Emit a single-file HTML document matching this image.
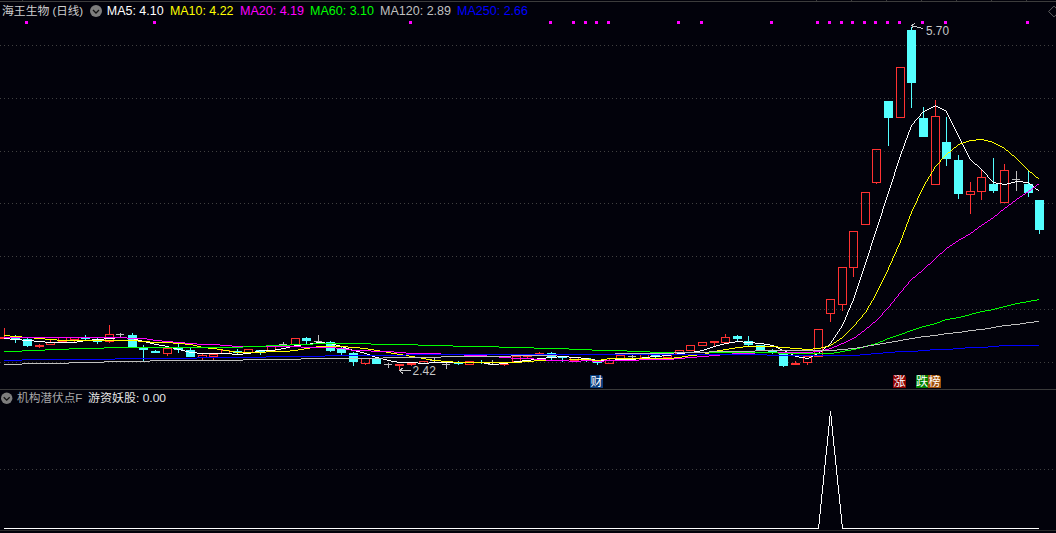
<!DOCTYPE html>
<html lang="zh-CN"><head><meta charset="utf-8"><title>海王生物(日线)</title>
<style>html,body{margin:0;padding:0;background:#02020b;overflow:hidden}svg{display:block}text{font-family:"Liberation Sans","Noto Sans CJK SC",sans-serif;font-size:12px}.cj{font-family:"Liberation Sans","Noto Sans CJK SC",sans-serif}.ic{font-family:"Noto Sans CJK SC",sans-serif;font-size:12px;fill:#fff}.ma{fill:none;stroke-width:1;shape-rendering:crispEdges}</style></head><body>
<svg width="1056" height="533" viewBox="0 0 1056 533">
<defs><pattern id="dot" x="0" y="0" width="4" height="1" patternUnits="userSpaceOnUse"><rect x="0" y="0" width="1" height="1" fill="#404040"/></pattern></defs>
<rect width="1056" height="533" fill="#02020b"/>
<g shape-rendering="crispEdges">
<rect x="0" y="1" width="1056" height="1" fill="#3c3c3c"/>
<rect x="22" y="0" width="1" height="1" fill="#3c3c3c"/>
<rect x="816" y="0" width="1" height="1" fill="#3c3c3c"/>
<rect x="851" y="0" width="1" height="1" fill="#3c3c3c"/>
<rect x="886" y="0" width="1" height="1" fill="#3c3c3c"/>
<rect x="921" y="0" width="1" height="1" fill="#3c3c3c"/>
<rect x="956" y="0" width="1" height="1" fill="#3c3c3c"/>
<rect x="991" y="0" width="1" height="1" fill="#3c3c3c"/>
<rect x="1026" y="0" width="1" height="1" fill="#3c3c3c"/>
<rect x="0" y="389" width="1056" height="1" fill="#3a3a3a"/>
<rect x="0" y="530" width="1056" height="1" fill="#2c2c2c"/>
<rect x="0" y="45" width="1056" height="1" fill="url(#dot)"/>
<rect x="0" y="98" width="1056" height="1" fill="url(#dot)"/>
<rect x="0" y="151" width="1056" height="1" fill="url(#dot)"/>
<rect x="0" y="203" width="1056" height="1" fill="url(#dot)"/>
<rect x="0" y="256" width="1056" height="1" fill="url(#dot)"/>
<rect x="0" y="309" width="1056" height="1" fill="url(#dot)"/>
<rect x="0" y="362" width="1056" height="1" fill="url(#dot)"/>
<rect x="0" y="469" width="1056" height="1" fill="url(#dot)"/>
<rect x="25" y="21" width="3" height="3" fill="#ff00ff"/>
<rect x="153" y="21" width="3" height="3" fill="#ff00ff"/>
<rect x="409" y="21" width="3" height="3" fill="#ff00ff"/>
<rect x="549" y="21" width="3" height="3" fill="#ff00ff"/>
<rect x="572" y="21" width="3" height="3" fill="#ff00ff"/>
<rect x="584" y="21" width="3" height="3" fill="#ff00ff"/>
<rect x="595" y="21" width="3" height="3" fill="#ff00ff"/>
<rect x="607" y="21" width="3" height="3" fill="#ff00ff"/>
<rect x="677" y="21" width="3" height="3" fill="#ff00ff"/>
<rect x="700" y="21" width="3" height="3" fill="#ff00ff"/>
<rect x="770" y="21" width="3" height="3" fill="#ff00ff"/>
<rect x="816" y="21" width="3" height="3" fill="#ff00ff"/>
<rect x="828" y="21" width="3" height="3" fill="#ff00ff"/>
<rect x="840" y="21" width="3" height="3" fill="#ff00ff"/>
<rect x="851" y="21" width="3" height="3" fill="#ff00ff"/>
<rect x="863" y="21" width="3" height="3" fill="#ff00ff"/>
<rect x="874" y="21" width="3" height="3" fill="#ff00ff"/>
<rect x="886" y="21" width="3" height="3" fill="#ff00ff"/>
<rect x="898" y="21" width="3" height="3" fill="#ff00ff"/>
<rect x="921" y="21" width="3" height="3" fill="#ff00ff"/>
<rect x="944" y="21" width="3" height="3" fill="#ff00ff"/>
<rect x="1026" y="21" width="3" height="3" fill="#ff00ff"/>
<rect x="4" y="328" width="1" height="11" fill="#ff3232"/>
<rect x="0" y="337" width="9" height="2" fill="#ff3232"/>
<rect x="15" y="335" width="1" height="8" fill="#54ffff"/>
<rect x="11" y="338" width="9" height="2" fill="#54ffff"/>
<rect x="27" y="338" width="1" height="9" fill="#54ffff"/>
<rect x="23" y="339" width="9" height="7" fill="#54ffff"/>
<rect x="39" y="344" width="1" height="4" fill="#ff3232"/>
<rect x="35" y="345" width="9" height="2" fill="#ff3232"/>
<rect x="50" y="340" width="1" height="2" fill="#ff3232"/>
<rect x="46" y="342" width="9" height="1" fill="#ff3232"/>
<rect x="46" y="344" width="9" height="1" fill="#ff3232"/>
<rect x="46" y="342" width="1" height="3" fill="#ff3232"/>
<rect x="54" y="342" width="1" height="3" fill="#ff3232"/>
<rect x="58" y="337" width="9" height="1" fill="#ff3232"/>
<rect x="58" y="341" width="9" height="1" fill="#ff3232"/>
<rect x="58" y="337" width="1" height="5" fill="#ff3232"/>
<rect x="66" y="337" width="1" height="5" fill="#ff3232"/>
<rect x="74" y="340" width="1" height="2" fill="#ff3232"/>
<rect x="70" y="337" width="9" height="1" fill="#ff3232"/>
<rect x="70" y="339" width="9" height="1" fill="#ff3232"/>
<rect x="70" y="337" width="1" height="3" fill="#ff3232"/>
<rect x="78" y="337" width="1" height="3" fill="#ff3232"/>
<rect x="85" y="335" width="1" height="5" fill="#54ffff"/>
<rect x="81" y="337" width="9" height="2" fill="#54ffff"/>
<rect x="97" y="338" width="1" height="6" fill="#54ffff"/>
<rect x="93" y="339" width="9" height="3" fill="#54ffff"/>
<rect x="109" y="325" width="1" height="9" fill="#ff3232"/>
<rect x="109" y="342" width="1" height="1" fill="#ff3232"/>
<rect x="105" y="334" width="9" height="1" fill="#ff3232"/>
<rect x="105" y="341" width="9" height="1" fill="#ff3232"/>
<rect x="105" y="334" width="1" height="8" fill="#ff3232"/>
<rect x="113" y="334" width="1" height="8" fill="#ff3232"/>
<rect x="120" y="333" width="1" height="4" fill="#c0c0c0"/>
<rect x="116" y="334" width="8" height="1" fill="#c0c0c0"/>
<rect x="132" y="333" width="1" height="14" fill="#54ffff"/>
<rect x="128" y="335" width="9" height="12" fill="#54ffff"/>
<rect x="143" y="345" width="1" height="16" fill="#54ffff"/>
<rect x="139" y="348" width="9" height="2" fill="#54ffff"/>
<rect x="155" y="350" width="1" height="3" fill="#54ffff"/>
<rect x="151" y="351" width="9" height="2" fill="#54ffff"/>
<rect x="167" y="354" width="1" height="2" fill="#ff3232"/>
<rect x="163" y="348" width="9" height="1" fill="#ff3232"/>
<rect x="163" y="353" width="9" height="1" fill="#ff3232"/>
<rect x="163" y="348" width="1" height="6" fill="#ff3232"/>
<rect x="171" y="348" width="1" height="6" fill="#ff3232"/>
<rect x="178" y="344" width="1" height="9" fill="#54ffff"/>
<rect x="174" y="348" width="9" height="2" fill="#54ffff"/>
<rect x="190" y="348" width="1" height="9" fill="#54ffff"/>
<rect x="186" y="350" width="9" height="7" fill="#54ffff"/>
<rect x="202" y="354" width="1" height="1" fill="#ff3232"/>
<rect x="202" y="358" width="1" height="2" fill="#ff3232"/>
<rect x="198" y="355" width="9" height="1" fill="#ff3232"/>
<rect x="198" y="357" width="9" height="1" fill="#ff3232"/>
<rect x="198" y="355" width="1" height="3" fill="#ff3232"/>
<rect x="206" y="355" width="1" height="3" fill="#ff3232"/>
<rect x="213" y="357" width="1" height="3" fill="#ff3232"/>
<rect x="209" y="354" width="9" height="1" fill="#ff3232"/>
<rect x="209" y="356" width="9" height="1" fill="#ff3232"/>
<rect x="209" y="354" width="1" height="3" fill="#ff3232"/>
<rect x="217" y="354" width="1" height="3" fill="#ff3232"/>
<rect x="221" y="350" width="9" height="1" fill="#ff3232"/>
<rect x="221" y="353" width="9" height="1" fill="#ff3232"/>
<rect x="221" y="350" width="1" height="4" fill="#ff3232"/>
<rect x="229" y="350" width="1" height="4" fill="#ff3232"/>
<rect x="237" y="349" width="1" height="5" fill="#54ffff"/>
<rect x="233" y="351" width="9" height="2" fill="#54ffff"/>
<rect x="248" y="353" width="1" height="1" fill="#ff3232"/>
<rect x="244" y="349" width="9" height="1" fill="#ff3232"/>
<rect x="244" y="352" width="9" height="1" fill="#ff3232"/>
<rect x="244" y="349" width="1" height="4" fill="#ff3232"/>
<rect x="252" y="349" width="1" height="4" fill="#ff3232"/>
<rect x="260" y="350" width="1" height="5" fill="#54ffff"/>
<rect x="256" y="350" width="9" height="2" fill="#54ffff"/>
<rect x="267" y="346" width="9" height="1" fill="#ff3232"/>
<rect x="267" y="350" width="9" height="1" fill="#ff3232"/>
<rect x="267" y="346" width="1" height="5" fill="#ff3232"/>
<rect x="275" y="346" width="1" height="5" fill="#ff3232"/>
<rect x="283" y="342" width="1" height="5" fill="#c0c0c0"/>
<rect x="279" y="344" width="8" height="1" fill="#c0c0c0"/>
<rect x="291" y="338" width="9" height="1" fill="#ff3232"/>
<rect x="291" y="344" width="9" height="1" fill="#ff3232"/>
<rect x="291" y="338" width="1" height="7" fill="#ff3232"/>
<rect x="299" y="338" width="1" height="7" fill="#ff3232"/>
<rect x="306" y="337" width="1" height="7" fill="#54ffff"/>
<rect x="302" y="338" width="9" height="3" fill="#54ffff"/>
<rect x="318" y="335" width="1" height="9" fill="#c0c0c0"/>
<rect x="314" y="341" width="8" height="1" fill="#c0c0c0"/>
<rect x="330" y="341" width="1" height="11" fill="#54ffff"/>
<rect x="326" y="342" width="9" height="9" fill="#54ffff"/>
<rect x="341" y="347" width="1" height="8" fill="#54ffff"/>
<rect x="337" y="348" width="9" height="5" fill="#54ffff"/>
<rect x="353" y="352" width="1" height="14" fill="#54ffff"/>
<rect x="349" y="353" width="9" height="9" fill="#54ffff"/>
<rect x="365" y="364" width="1" height="1" fill="#ff3232"/>
<rect x="361" y="358" width="9" height="1" fill="#ff3232"/>
<rect x="361" y="363" width="9" height="1" fill="#ff3232"/>
<rect x="361" y="358" width="1" height="6" fill="#ff3232"/>
<rect x="369" y="358" width="1" height="6" fill="#ff3232"/>
<rect x="372" y="359" width="9" height="5" fill="#54ffff"/>
<rect x="388" y="363" width="1" height="5" fill="#c0c0c0"/>
<rect x="384" y="364" width="8" height="1" fill="#c0c0c0"/>
<rect x="399" y="364" width="1" height="7" fill="#ff3232"/>
<rect x="395" y="364" width="9" height="2" fill="#ff3232"/>
<rect x="411" y="363" width="1" height="3" fill="#ff3232"/>
<rect x="407" y="363" width="9" height="2" fill="#ff3232"/>
<rect x="419" y="361" width="9" height="1" fill="#ff3232"/>
<rect x="419" y="363" width="9" height="1" fill="#ff3232"/>
<rect x="419" y="361" width="1" height="3" fill="#ff3232"/>
<rect x="427" y="361" width="1" height="3" fill="#ff3232"/>
<rect x="434" y="357" width="1" height="5" fill="#c0c0c0"/>
<rect x="430" y="360" width="8" height="1" fill="#c0c0c0"/>
<rect x="446" y="363" width="1" height="6" fill="#c0c0c0"/>
<rect x="442" y="364" width="8" height="1" fill="#c0c0c0"/>
<rect x="458" y="361" width="1" height="4" fill="#54ffff"/>
<rect x="454" y="363" width="9" height="1" fill="#54ffff"/>
<rect x="465" y="361" width="9" height="1" fill="#ff3232"/>
<rect x="465" y="364" width="9" height="1" fill="#ff3232"/>
<rect x="465" y="361" width="1" height="4" fill="#ff3232"/>
<rect x="473" y="361" width="1" height="4" fill="#ff3232"/>
<rect x="481" y="360" width="1" height="4" fill="#54ffff"/>
<rect x="477" y="362" width="9" height="1" fill="#54ffff"/>
<rect x="492" y="360" width="1" height="5" fill="#c0c0c0"/>
<rect x="488" y="364" width="8" height="1" fill="#c0c0c0"/>
<rect x="504" y="364" width="1" height="2" fill="#ff3232"/>
<rect x="500" y="364" width="9" height="1" fill="#ff3232"/>
<rect x="512" y="356" width="9" height="1" fill="#ff3232"/>
<rect x="512" y="361" width="9" height="1" fill="#ff3232"/>
<rect x="512" y="356" width="1" height="6" fill="#ff3232"/>
<rect x="520" y="356" width="1" height="6" fill="#ff3232"/>
<rect x="527" y="356" width="1" height="2" fill="#ff3232"/>
<rect x="523" y="356" width="9" height="1" fill="#ff3232"/>
<rect x="539" y="352" width="1" height="4" fill="#ff3232"/>
<rect x="535" y="353" width="9" height="1" fill="#ff3232"/>
<rect x="551" y="352" width="1" height="8" fill="#54ffff"/>
<rect x="547" y="353" width="9" height="5" fill="#54ffff"/>
<rect x="562" y="356" width="1" height="6" fill="#54ffff"/>
<rect x="558" y="356" width="9" height="2" fill="#54ffff"/>
<rect x="570" y="357" width="9" height="1" fill="#ff3232"/>
<rect x="570" y="360" width="9" height="1" fill="#ff3232"/>
<rect x="570" y="357" width="1" height="4" fill="#ff3232"/>
<rect x="578" y="357" width="1" height="4" fill="#ff3232"/>
<rect x="586" y="358" width="1" height="4" fill="#54ffff"/>
<rect x="582" y="358" width="9" height="2" fill="#54ffff"/>
<rect x="597" y="360" width="1" height="5" fill="#54ffff"/>
<rect x="593" y="360" width="9" height="3" fill="#54ffff"/>
<rect x="609" y="359" width="1" height="1" fill="#ff3232"/>
<rect x="605" y="360" width="9" height="1" fill="#ff3232"/>
<rect x="605" y="363" width="9" height="1" fill="#ff3232"/>
<rect x="605" y="360" width="1" height="4" fill="#ff3232"/>
<rect x="613" y="360" width="1" height="4" fill="#ff3232"/>
<rect x="616" y="355" width="9" height="1" fill="#ff3232"/>
<rect x="616" y="358" width="9" height="1" fill="#ff3232"/>
<rect x="616" y="355" width="1" height="4" fill="#ff3232"/>
<rect x="624" y="355" width="1" height="4" fill="#ff3232"/>
<rect x="632" y="355" width="1" height="3" fill="#c0c0c0"/>
<rect x="628" y="356" width="8" height="1" fill="#c0c0c0"/>
<rect x="640" y="354" width="9" height="1" fill="#ff3232"/>
<rect x="640" y="357" width="9" height="1" fill="#ff3232"/>
<rect x="640" y="354" width="1" height="4" fill="#ff3232"/>
<rect x="648" y="354" width="1" height="4" fill="#ff3232"/>
<rect x="655" y="355" width="1" height="3" fill="#54ffff"/>
<rect x="651" y="355" width="9" height="2" fill="#54ffff"/>
<rect x="663" y="355" width="9" height="1" fill="#ff3232"/>
<rect x="663" y="357" width="9" height="1" fill="#ff3232"/>
<rect x="663" y="355" width="1" height="3" fill="#ff3232"/>
<rect x="671" y="355" width="1" height="3" fill="#ff3232"/>
<rect x="675" y="350" width="9" height="1" fill="#ff3232"/>
<rect x="675" y="353" width="9" height="1" fill="#ff3232"/>
<rect x="675" y="350" width="1" height="4" fill="#ff3232"/>
<rect x="683" y="350" width="1" height="4" fill="#ff3232"/>
<rect x="686" y="345" width="9" height="1" fill="#ff3232"/>
<rect x="686" y="350" width="9" height="1" fill="#ff3232"/>
<rect x="686" y="345" width="1" height="6" fill="#ff3232"/>
<rect x="694" y="345" width="1" height="6" fill="#ff3232"/>
<rect x="698" y="342" width="9" height="1" fill="#ff3232"/>
<rect x="698" y="345" width="9" height="1" fill="#ff3232"/>
<rect x="698" y="342" width="1" height="4" fill="#ff3232"/>
<rect x="706" y="342" width="1" height="4" fill="#ff3232"/>
<rect x="714" y="341" width="1" height="5" fill="#ff3232"/>
<rect x="710" y="341" width="9" height="2" fill="#ff3232"/>
<rect x="725" y="334" width="1" height="3" fill="#ff3232"/>
<rect x="721" y="337" width="9" height="1" fill="#ff3232"/>
<rect x="721" y="342" width="9" height="1" fill="#ff3232"/>
<rect x="721" y="337" width="1" height="6" fill="#ff3232"/>
<rect x="729" y="337" width="1" height="6" fill="#ff3232"/>
<rect x="737" y="335" width="1" height="6" fill="#54ffff"/>
<rect x="733" y="336" width="9" height="3" fill="#54ffff"/>
<rect x="748" y="336" width="1" height="10" fill="#54ffff"/>
<rect x="744" y="341" width="9" height="4" fill="#54ffff"/>
<rect x="760" y="345" width="1" height="6" fill="#54ffff"/>
<rect x="756" y="345" width="9" height="5" fill="#54ffff"/>
<rect x="772" y="349" width="1" height="5" fill="#54ffff"/>
<rect x="768" y="350" width="9" height="2" fill="#54ffff"/>
<rect x="783" y="353" width="1" height="14" fill="#54ffff"/>
<rect x="779" y="353" width="9" height="13" fill="#54ffff"/>
<rect x="795" y="361" width="1" height="4" fill="#ff3232"/>
<rect x="791" y="363" width="9" height="2" fill="#ff3232"/>
<rect x="807" y="363" width="1" height="2" fill="#ff3232"/>
<rect x="803" y="356" width="9" height="1" fill="#ff3232"/>
<rect x="803" y="362" width="9" height="1" fill="#ff3232"/>
<rect x="803" y="356" width="1" height="7" fill="#ff3232"/>
<rect x="811" y="356" width="1" height="7" fill="#ff3232"/>
<rect x="814" y="329" width="9" height="1" fill="#ff3232"/>
<rect x="814" y="356" width="9" height="1" fill="#ff3232"/>
<rect x="814" y="329" width="1" height="28" fill="#ff3232"/>
<rect x="822" y="329" width="1" height="28" fill="#ff3232"/>
<rect x="830" y="314" width="1" height="8" fill="#ff3232"/>
<rect x="826" y="299" width="9" height="1" fill="#ff3232"/>
<rect x="826" y="313" width="9" height="1" fill="#ff3232"/>
<rect x="826" y="299" width="1" height="15" fill="#ff3232"/>
<rect x="834" y="299" width="1" height="15" fill="#ff3232"/>
<rect x="842" y="305" width="1" height="6" fill="#ff3232"/>
<rect x="838" y="267" width="9" height="1" fill="#ff3232"/>
<rect x="838" y="304" width="9" height="1" fill="#ff3232"/>
<rect x="838" y="267" width="1" height="38" fill="#ff3232"/>
<rect x="846" y="267" width="1" height="38" fill="#ff3232"/>
<rect x="853" y="268" width="1" height="9" fill="#ff3232"/>
<rect x="849" y="231" width="9" height="1" fill="#ff3232"/>
<rect x="849" y="267" width="9" height="1" fill="#ff3232"/>
<rect x="849" y="231" width="1" height="37" fill="#ff3232"/>
<rect x="857" y="231" width="1" height="37" fill="#ff3232"/>
<rect x="861" y="192" width="9" height="1" fill="#ff3232"/>
<rect x="861" y="224" width="9" height="1" fill="#ff3232"/>
<rect x="861" y="192" width="1" height="33" fill="#ff3232"/>
<rect x="869" y="192" width="1" height="33" fill="#ff3232"/>
<rect x="876" y="183" width="1" height="1" fill="#ff3232"/>
<rect x="872" y="149" width="9" height="1" fill="#ff3232"/>
<rect x="872" y="182" width="9" height="1" fill="#ff3232"/>
<rect x="872" y="149" width="1" height="34" fill="#ff3232"/>
<rect x="880" y="149" width="1" height="34" fill="#ff3232"/>
<rect x="888" y="101" width="1" height="45" fill="#54ffff"/>
<rect x="884" y="101" width="9" height="17" fill="#54ffff"/>
<rect x="896" y="67" width="9" height="1" fill="#ff3232"/>
<rect x="896" y="117" width="9" height="1" fill="#ff3232"/>
<rect x="896" y="67" width="1" height="51" fill="#ff3232"/>
<rect x="904" y="67" width="1" height="51" fill="#ff3232"/>
<rect x="911" y="27" width="1" height="81" fill="#54ffff"/>
<rect x="907" y="30" width="9" height="53" fill="#54ffff"/>
<rect x="923" y="107" width="1" height="30" fill="#54ffff"/>
<rect x="919" y="118" width="9" height="19" fill="#54ffff"/>
<rect x="935" y="100" width="1" height="16" fill="#ff3232"/>
<rect x="931" y="116" width="9" height="1" fill="#ff3232"/>
<rect x="931" y="184" width="9" height="1" fill="#ff3232"/>
<rect x="931" y="116" width="1" height="69" fill="#ff3232"/>
<rect x="939" y="116" width="1" height="69" fill="#ff3232"/>
<rect x="946" y="117" width="1" height="49" fill="#54ffff"/>
<rect x="942" y="142" width="9" height="17" fill="#54ffff"/>
<rect x="958" y="155" width="1" height="44" fill="#54ffff"/>
<rect x="954" y="160" width="9" height="34" fill="#54ffff"/>
<rect x="970" y="182" width="1" height="9" fill="#ff3232"/>
<rect x="970" y="195" width="1" height="19" fill="#ff3232"/>
<rect x="966" y="191" width="9" height="1" fill="#ff3232"/>
<rect x="966" y="194" width="9" height="1" fill="#ff3232"/>
<rect x="966" y="191" width="1" height="4" fill="#ff3232"/>
<rect x="974" y="191" width="1" height="4" fill="#ff3232"/>
<rect x="981" y="170" width="1" height="7" fill="#ff3232"/>
<rect x="981" y="192" width="1" height="8" fill="#ff3232"/>
<rect x="977" y="177" width="9" height="1" fill="#ff3232"/>
<rect x="977" y="191" width="9" height="1" fill="#ff3232"/>
<rect x="977" y="177" width="1" height="15" fill="#ff3232"/>
<rect x="985" y="177" width="1" height="15" fill="#ff3232"/>
<rect x="993" y="158" width="1" height="35" fill="#54ffff"/>
<rect x="989" y="184" width="9" height="7" fill="#54ffff"/>
<rect x="1004" y="164" width="1" height="6" fill="#ff3232"/>
<rect x="1000" y="170" width="9" height="1" fill="#ff3232"/>
<rect x="1000" y="202" width="9" height="1" fill="#ff3232"/>
<rect x="1000" y="170" width="1" height="33" fill="#ff3232"/>
<rect x="1008" y="170" width="1" height="33" fill="#ff3232"/>
<rect x="1016" y="171" width="1" height="20" fill="#c0c0c0"/>
<rect x="1012" y="179" width="8" height="1" fill="#c0c0c0"/>
<rect x="1028" y="171" width="1" height="26" fill="#54ffff"/>
<rect x="1024" y="184" width="9" height="9" fill="#54ffff"/>
<rect x="1039" y="200" width="1" height="34" fill="#54ffff"/>
<rect x="1035" y="200" width="9" height="30" fill="#54ffff"/>
</g>
<path shape-rendering="crispEdges" fill="#ffffff" d="M4 338h6v1h-6zM10 339h12v1h-12zM22 340h12v1h-12zM34 341h11v1h-11zM45 342h32v1h-32zM77 341h6v1h-6zM83 340h9v1h-9zM92 339h12v1h-12zM104 338h11v1h-11zM115 337h12v1h-12zM127 338h7v1h-7zM134 339h4v1h-4zM138 340h4v1h-4zM142 341h4v1h-4zM146 342h4v1h-4zM150 343h4v1h-4zM154 344h5v1h-5zM159 345h6v1h-6zM165 346h4v1h-4zM169 347h4v1h-4zM173 348h4v1h-4zM177 349h4v1h-4zM181 350h4v1h-4zM185 351h4v1h-4zM189 352h8v1h-8zM197 353h35v1h-35zM232 354h11v1h-11zM243 353h8v1h-8zM251 352h4v1h-4zM255 351h4v1h-4zM259 350h16v1h-16zM275 349h6v1h-6zM281 348h5v1h-5zM286 347h4v1h-4zM290 346h4v1h-4zM294 345h7v1h-7zM301 344h9v1h-9zM310 343h6v1h-6zM316 342h9v1h-9zM325 343h7v1h-7zM332 344h4v1h-4zM336 345h4v1h-4zM340 346h3v1h-3zM343 347h3v1h-3zM346 348h3v1h-3zM349 349h3v1h-3zM352 350h4v1h-4zM356 351h4v1h-4zM360 352h4v1h-4zM364 353h3v1h-3zM367 354h3v1h-3zM370 355h2v1h-2zM372 356h3v1h-3zM375 357h4v1h-4zM379 358h4v1h-4zM383 359h4v1h-4zM387 360h4v1h-4zM391 361h6v1h-6zM397 362h21v1h-21zM418 363h11v1h-11zM429 362h55v1h-55zM484 363h6v1h-6zM490 364h9v1h-9zM499 363h9v1h-9zM508 362h6v1h-6zM514 361h8v1h-8zM522 360h9v1h-9zM531 359h6v1h-6zM537 358h9v1h-9zM546 357h11v1h-11zM557 356h12v1h-12zM569 357h12v1h-12zM581 358h8v1h-8zM589 359h6v1h-6zM595 360h20v1h-20zM615 359h21v1h-21zM636 358h6v1h-6zM642 357h8v1h-8zM650 356h12v1h-12zM662 355h9v1h-9zM671 354h6v1h-6zM677 353h8v1h-8zM685 352h9v1h-9zM694 351h6v1h-6zM700 350h4v1h-4zM704 349h3v1h-3zM707 348h3v1h-3zM710 347h3v1h-3zM713 346h3v1h-3zM716 345h4v1h-4zM720 344h4v1h-4zM724 343h5v1h-5zM729 342h6v1h-6zM735 341h8v1h-8zM743 342h12v1h-12zM755 343h9v1h-9zM764 344h6v1h-6zM770 345h4v1h-4zM774 346h2v1h-2zM776 347h2v1h-2zM778 348h2v1h-2zM780 349h2v1h-2zM782 350h3v1h-3zM785 351h2v1h-2zM787 352h2v1h-2zM789 353h2v1h-2zM791 354h2v1h-2zM793 355h2v1h-2zM795 356h4v1h-4zM799 357h6v1h-6zM805 358h4v1h-4zM809 357h2v1h-2zM811 356h2v1h-2zM813 355h2v1h-2zM815 354h2v1h-2zM817 353h2v1h-2zM819 352h1v1h-1zM820 351h2v1h-2zM822 350h1v1h-1zM823 349h1v1h-1zM824 348h1v1h-1zM825 347h1v1h-1zM826 346h2v1h-2zM828 345h1v1h-1zM829 344h1v1h-1zM830 343h1v1h-1zM831 341h1v2h-1zM832 340h1v1h-1zM833 338h1v2h-1zM834 337h1v1h-1zM835 335h1v2h-1zM836 334h1v1h-1zM837 332h1v2h-1zM838 331h1v1h-1zM839 329h1v2h-1zM840 328h1v1h-1zM841 326h1v2h-1zM842 324h1v2h-1zM843 322h1v2h-1zM844 320h1v2h-1zM845 317h1v3h-1zM846 315h1v2h-1zM847 312h1v3h-1zM848 310h1v2h-1zM849 308h1v2h-1zM850 305h1v3h-1zM851 303h1v2h-1zM852 301h1v2h-1zM853 298h1v3h-1zM854 295h1v3h-1zM855 292h1v3h-1zM856 289h1v3h-1zM857 286h1v3h-1zM858 283h1v3h-1zM859 280h1v3h-1zM860 277h1v3h-1zM861 274h1v3h-1zM862 271h1v3h-1zM863 268h1v3h-1zM864 265h1v3h-1zM865 262h1v3h-1zM866 259h1v3h-1zM867 256h1v3h-1zM868 253h1v3h-1zM869 250h1v3h-1zM870 246h1v4h-1zM871 243h1v3h-1zM872 240h1v3h-1zM873 237h1v3h-1zM874 234h1v3h-1zM875 231h1v3h-1zM876 228h1v3h-1zM877 225h1v3h-1zM878 222h1v3h-1zM879 219h1v3h-1zM880 216h1v3h-1zM881 213h1v3h-1zM882 209h1v4h-1zM883 206h1v3h-1zM884 203h1v3h-1zM885 200h1v3h-1zM886 197h1v3h-1zM887 194h1v3h-1zM888 191h1v3h-1zM889 188h1v3h-1zM890 185h1v3h-1zM891 182h1v3h-1zM892 179h1v3h-1zM893 176h1v3h-1zM894 172h1v4h-1zM895 169h1v3h-1zM896 166h1v3h-1zM897 163h1v3h-1zM898 160h1v3h-1zM899 157h1v3h-1zM900 154h1v3h-1zM901 151h1v3h-1zM902 149h1v2h-1zM903 146h1v3h-1zM904 143h1v3h-1zM905 140h1v3h-1zM906 138h1v2h-1zM907 135h1v3h-1zM908 132h1v3h-1zM909 130h1v2h-1zM910 127h1v3h-1zM911 125h1v2h-1zM912 124h1v1h-1zM913 123h1v1h-1zM914 121h1v2h-1zM915 120h1v1h-1zM916 119h1v1h-1zM917 118h1v1h-1zM918 117h1v1h-1zM919 116h1v1h-1zM920 114h1v2h-1zM921 113h1v1h-1zM922 112h1v1h-1zM923 111h2v1h-2zM925 110h2v1h-2zM927 109h2v1h-2zM929 108h2v1h-2zM931 107h2v1h-2zM933 106h2v1h-2zM935 105h1v1h-1zM936 106h2v1h-2zM938 107h2v1h-2zM940 108h2v1h-2zM942 109h2v1h-2zM944 110h2v1h-2zM946 111h1v2h-1zM947 113h1v2h-1zM948 115h1v2h-1zM949 117h1v2h-1zM950 119h1v2h-1zM951 121h1v2h-1zM952 123h1v2h-1zM953 125h1v2h-1zM954 127h1v2h-1zM955 129h1v2h-1zM956 131h1v2h-1zM957 133h1v2h-1zM958 135h1v2h-1zM959 137h1v2h-1zM960 139h1v2h-1zM961 141h1v2h-1zM962 143h1v2h-1zM963 145h1v2h-1zM964 147h1v2h-1zM965 149h1v2h-1zM966 151h1v2h-1zM967 153h1v2h-1zM968 155h1v2h-1zM969 157h1v2h-1zM970 159h1v1h-1zM971 160h1v1h-1zM972 161h1v1h-1zM973 162h1v1h-1zM974 163h1v1h-1zM975 164h2v1h-2zM977 165h1v1h-1zM978 166h1v1h-1zM979 167h1v1h-1zM980 168h1v1h-1zM981 169h1v1h-1zM982 170h1v1h-1zM983 171h1v1h-1zM984 172h1v1h-1zM985 173h1v1h-1zM986 174h1v1h-1zM987 175h1v2h-1zM988 177h1v1h-1zM989 178h1v1h-1zM990 179h1v1h-1zM991 180h1v1h-1zM992 181h1v1h-1zM993 182h3v1h-3zM996 183h6v1h-6zM1002 184h5v1h-5zM1007 183h4v1h-4zM1011 182h4v1h-4zM1015 181h8v1h-8zM1023 182h6v1h-6zM1029 183h1v1h-1zM1030 184h2v1h-2zM1032 185h1v1h-1zM1033 186h1v1h-1zM1034 187h1v1h-1zM1035 188h1v1h-1zM1036 189h2v1h-2zM1038 190h1v1h-1z"/>
<path shape-rendering="crispEdges" fill="#ffff00" d="M4 335h6v1h-6zM10 336h12v1h-12zM22 337h12v1h-12zM34 338h11v1h-11zM45 339h12v1h-12zM57 340h81v1h-81zM138 341h12v1h-12zM150 342h23v1h-23zM173 343h12v1h-12zM185 344h8v1h-8zM193 345h4v1h-4zM197 346h4v1h-4zM201 347h7v1h-7zM208 348h9v1h-9zM217 349h6v1h-6zM223 350h6v1h-6zM229 351h6v1h-6zM235 352h31v1h-31zM266 351h24v1h-24zM290 350h8v1h-8zM298 349h6v1h-6zM304 348h6v1h-6zM310 347h6v1h-6zM316 346h32v1h-32zM348 347h12v1h-12zM360 348h8v1h-8zM368 349h6v1h-6zM374 350h6v1h-6zM380 351h6v1h-6zM386 352h5v1h-5zM391 353h6v1h-6zM397 354h6v1h-6zM403 355h6v1h-6zM409 356h6v1h-6zM415 357h6v1h-6zM421 358h5v1h-5zM426 359h6v1h-6zM432 360h9v1h-9zM441 361h12v1h-12zM453 362h69v1h-69zM522 361h12v1h-12zM534 360h35v1h-35zM569 359h23v1h-23zM592 360h9v1h-9zM601 359h6v1h-6zM607 358h67v1h-67zM674 357h8v1h-8zM682 356h6v1h-6zM688 355h9v1h-9zM697 354h8v1h-8zM705 353h4v1h-4zM709 352h4v1h-4zM713 351h4v1h-4zM717 350h6v1h-6zM723 349h6v1h-6zM729 348h6v1h-6zM735 347h8v1h-8zM743 346h35v1h-35zM778 347h12v1h-12zM790 348h12v1h-12zM802 349h11v1h-11zM813 348h8v1h-8zM821 347h4v1h-4zM825 346h4v1h-4zM829 345h2v1h-2zM831 344h2v1h-2zM833 343h1v1h-1zM834 342h2v1h-2zM836 341h1v1h-1zM837 340h2v1h-2zM839 339h1v1h-1zM840 338h2v1h-2zM842 337h1v1h-1zM843 336h1v1h-1zM844 335h1v1h-1zM845 334h1v1h-1zM846 333h1v1h-1zM847 332h1v1h-1zM848 331h1v1h-1zM849 330h1v1h-1zM850 329h1v1h-1zM851 328h1v1h-1zM852 327h1v1h-1zM853 326h1v1h-1zM854 325h1v1h-1zM855 324h1v1h-1zM856 322h1v2h-1zM857 321h1v1h-1zM858 320h1v1h-1zM859 319h1v1h-1zM860 318h1v1h-1zM861 317h1v1h-1zM862 315h1v2h-1zM863 314h1v1h-1zM864 313h1v1h-1zM865 312h1v1h-1zM866 310h1v2h-1zM867 308h1v2h-1zM868 306h1v2h-1zM869 305h1v1h-1zM870 303h1v2h-1zM871 301h1v2h-1zM872 300h1v1h-1zM873 298h1v2h-1zM874 296h1v2h-1zM875 294h1v2h-1zM876 292h1v2h-1zM877 290h1v2h-1zM878 288h1v2h-1zM879 286h1v2h-1zM880 284h1v2h-1zM881 282h1v2h-1zM882 280h1v2h-1zM883 278h1v2h-1zM884 276h1v2h-1zM885 274h1v2h-1zM886 272h1v2h-1zM887 270h1v2h-1zM888 267h1v3h-1zM889 265h1v2h-1zM890 263h1v2h-1zM891 261h1v2h-1zM892 258h1v3h-1zM893 256h1v2h-1zM894 254h1v2h-1zM895 252h1v2h-1zM896 249h1v3h-1zM897 247h1v2h-1zM898 245h1v2h-1zM899 243h1v2h-1zM900 240h1v3h-1zM901 238h1v2h-1zM902 235h1v3h-1zM903 232h1v3h-1zM904 230h1v2h-1zM905 227h1v3h-1zM906 224h1v3h-1zM907 222h1v2h-1zM908 219h1v3h-1zM909 216h1v3h-1zM910 214h1v2h-1zM911 211h1v3h-1zM912 209h1v2h-1zM913 207h1v2h-1zM914 205h1v2h-1zM915 203h1v2h-1zM916 201h1v2h-1zM917 198h1v3h-1zM918 196h1v2h-1zM919 194h1v2h-1zM920 192h1v2h-1zM921 190h1v2h-1zM922 188h1v2h-1zM923 186h1v2h-1zM924 184h1v2h-1zM925 182h1v2h-1zM926 181h1v1h-1zM927 179h1v2h-1zM928 177h1v2h-1zM929 176h1v1h-1zM930 174h1v2h-1zM931 172h1v2h-1zM932 171h1v1h-1zM933 169h1v2h-1zM934 167h1v2h-1zM935 166h1v1h-1zM936 165h1v1h-1zM937 164h1v1h-1zM938 163h1v1h-1zM939 162h1v1h-1zM940 160h1v2h-1zM941 159h1v1h-1zM942 158h1v1h-1zM943 157h1v1h-1zM944 156h1v1h-1zM945 155h1v1h-1zM946 154h1v1h-1zM947 153h1v1h-1zM948 152h2v1h-2zM950 151h1v1h-1zM951 150h1v1h-1zM952 149h1v1h-1zM953 148h1v1h-1zM954 147h2v1h-2zM956 146h1v1h-1zM957 145h1v1h-1zM958 144h2v1h-2zM960 143h3v1h-3zM963 142h3v1h-3zM966 141h3v1h-3zM969 140h7v1h-7zM976 139h8v1h-8zM984 140h4v1h-4zM988 141h4v1h-4zM992 142h2v1h-2zM994 143h2v1h-2zM996 144h2v1h-2zM998 145h2v1h-2zM1000 146h2v1h-2zM1002 147h2v1h-2zM1004 148h1v1h-1zM1005 149h1v1h-1zM1006 150h2v1h-2zM1008 151h1v1h-1zM1009 152h1v1h-1zM1010 153h1v1h-1zM1011 154h1v1h-1zM1012 155h2v1h-2zM1014 156h1v1h-1zM1015 157h1v1h-1zM1016 158h1v1h-1zM1017 159h1v1h-1zM1018 160h1v1h-1zM1019 161h1v1h-1zM1020 162h1v1h-1zM1021 163h1v1h-1zM1022 164h1v1h-1zM1023 165h1v1h-1zM1024 166h1v1h-1zM1025 167h1v1h-1zM1026 168h1v1h-1zM1027 169h1v1h-1zM1028 170h1v1h-1zM1029 171h1v1h-1zM1030 172h2v1h-2zM1032 173h1v1h-1zM1033 174h1v1h-1zM1034 175h1v1h-1zM1035 176h1v1h-1zM1036 177h2v1h-2zM1038 178h1v1h-1z"/>
<path shape-rendering="crispEdges" fill="#ff00ff" d="M4 337h123v1h-123zM127 338h20v1h-20zM147 339h6v1h-6zM153 340h9v1h-9zM162 341h11v1h-11zM173 342h12v1h-12zM185 343h12v1h-12zM197 344h23v1h-23zM220 345h12v1h-12zM232 346h69v1h-69zM301 347h35v1h-35zM336 348h9v1h-9zM345 349h6v1h-6zM351 350h20v1h-20zM371 351h23v1h-23zM394 352h12v1h-12zM406 353h35v1h-35zM441 354h23v1h-23zM464 355h23v1h-23zM487 356h12v1h-12zM499 357h12v1h-12zM511 358h23v1h-23zM534 359h12v1h-12zM546 360h23v1h-23zM569 361h12v1h-12zM581 360h11v1h-11zM592 361h12v1h-12zM604 360h35v1h-35zM639 359h35v1h-35zM674 358h11v1h-11zM685 357h12v1h-12zM697 356h12v1h-12zM709 355h11v1h-11zM720 354h12v1h-12zM732 353h23v1h-23zM755 352h58v1h-58zM813 351h8v1h-8zM821 350h4v1h-4zM825 349h4v1h-4zM829 348h3v1h-3zM832 347h2v1h-2zM834 346h3v1h-3zM837 345h2v1h-2zM839 344h2v1h-2zM841 343h3v1h-3zM844 342h2v1h-2zM846 341h2v1h-2zM848 340h2v1h-2zM850 339h2v1h-2zM852 338h2v1h-2zM854 337h2v1h-2zM856 336h1v1h-1zM857 335h1v1h-1zM858 334h2v1h-2zM860 333h1v1h-1zM861 332h1v1h-1zM862 331h2v1h-2zM864 330h1v1h-1zM865 329h1v1h-1zM866 328h1v1h-1zM867 327h2v1h-2zM869 326h1v1h-1zM870 325h1v1h-1zM871 324h1v1h-1zM872 323h1v1h-1zM873 322h2v1h-2zM875 321h1v1h-1zM876 320h1v1h-1zM877 319h1v1h-1zM878 318h1v1h-1zM879 317h1v1h-1zM880 316h1v1h-1zM881 315h1v1h-1zM882 313h1v2h-1zM883 312h1v1h-1zM884 311h1v1h-1zM885 310h1v1h-1zM886 309h1v1h-1zM887 308h1v1h-1zM888 307h1v1h-1zM889 306h1v1h-1zM890 304h1v2h-1zM891 303h1v1h-1zM892 302h1v1h-1zM893 301h1v1h-1zM894 299h1v2h-1zM895 298h1v1h-1zM896 297h1v1h-1zM897 296h1v1h-1zM898 294h1v2h-1zM899 293h1v1h-1zM900 292h1v1h-1zM901 291h1v1h-1zM902 290h1v1h-1zM903 288h1v2h-1zM904 287h1v1h-1zM905 286h1v1h-1zM906 285h1v1h-1zM907 284h1v1h-1zM908 282h1v2h-1zM909 281h1v1h-1zM910 280h1v1h-1zM911 279h1v1h-1zM912 278h1v1h-1zM913 277h2v1h-2zM915 276h1v1h-1zM916 275h1v1h-1zM917 274h1v1h-1zM918 273h1v1h-1zM919 272h2v1h-2zM921 271h1v1h-1zM922 270h1v1h-1zM923 269h1v1h-1zM924 268h1v1h-1zM925 267h1v1h-1zM926 266h1v1h-1zM927 265h1v1h-1zM928 264h2v1h-2zM930 263h1v1h-1zM931 262h1v1h-1zM932 261h1v1h-1zM933 260h1v1h-1zM934 259h1v1h-1zM935 258h1v1h-1zM936 257h1v1h-1zM937 256h1v1h-1zM938 255h1v1h-1zM939 254h1v1h-1zM940 253h2v1h-2zM942 252h1v1h-1zM943 251h1v1h-1zM944 250h1v1h-1zM945 249h1v1h-1zM946 248h1v1h-1zM947 247h2v1h-2zM949 246h1v1h-1zM950 245h2v1h-2zM952 244h1v1h-1zM953 243h2v1h-2zM955 242h1v1h-1zM956 241h2v1h-2zM958 240h1v1h-1zM959 239h2v1h-2zM961 238h2v1h-2zM963 237h2v1h-2zM965 236h1v1h-1zM966 235h2v1h-2zM968 234h2v1h-2zM970 233h1v1h-1zM971 232h2v1h-2zM973 231h1v1h-1zM974 230h1v1h-1zM975 229h2v1h-2zM977 228h1v1h-1zM978 227h1v1h-1zM979 226h2v1h-2zM981 225h1v1h-1zM982 224h2v1h-2zM984 223h1v1h-1zM985 222h2v1h-2zM987 221h1v1h-1zM988 220h2v1h-2zM990 219h1v1h-1zM991 218h2v1h-2zM993 217h1v1h-1zM994 216h1v1h-1zM995 215h2v1h-2zM997 214h1v1h-1zM998 213h1v1h-1zM999 212h1v1h-1zM1000 211h1v1h-1zM1001 210h2v1h-2zM1003 209h1v1h-1zM1004 208h1v1h-1zM1005 207h2v1h-2zM1007 206h1v1h-1zM1008 205h1v1h-1zM1009 204h2v1h-2zM1011 203h1v1h-1zM1012 202h1v1h-1zM1013 201h2v1h-2zM1015 200h1v1h-1zM1016 199h1v1h-1zM1017 198h2v1h-2zM1019 197h1v1h-1zM1020 196h2v1h-2zM1022 195h1v1h-1zM1023 194h2v1h-2zM1025 193h1v1h-1zM1026 192h2v1h-2zM1028 191h1v1h-1zM1029 190h2v1h-2zM1031 189h1v1h-1zM1032 188h1v1h-1zM1033 187h2v1h-2zM1035 186h1v1h-1zM1036 185h1v1h-1zM1037 184h2v1h-2z"/>
<path shape-rendering="crispEdges" fill="#00ff00" d="M4 351h18v1h-18zM22 350h23v1h-23zM45 349h24v1h-24zM69 348h35v1h-35zM104 347h139v1h-139zM243 346h23v1h-23zM266 345h24v1h-24zM290 344h23v1h-23zM313 343h58v1h-58zM371 344h47v1h-47zM418 345h35v1h-35zM453 346h46v1h-46zM499 347h35v1h-35zM534 348h35v1h-35zM569 349h23v1h-23zM592 350h35v1h-35zM627 351h23v1h-23zM650 352h128v1h-128zM778 353h56v1h-56zM834 352h6v1h-6zM840 351h5v1h-5zM845 350h6v1h-6zM851 349h5v1h-5zM856 348h4v1h-4zM860 347h4v1h-4zM864 346h3v1h-3zM867 345h4v1h-4zM871 344h4v1h-4zM875 343h3v1h-3zM878 342h2v1h-2zM880 341h3v1h-3zM883 340h2v1h-2zM885 339h2v1h-2zM887 338h3v1h-3zM890 337h3v1h-3zM893 336h3v1h-3zM896 335h3v1h-3zM899 334h3v1h-3zM902 333h3v1h-3zM905 332h2v1h-2zM907 331h3v1h-3zM910 330h3v1h-3zM913 329h3v1h-3zM916 328h3v1h-3zM919 327h3v1h-3zM922 326h4v1h-4zM926 325h4v1h-4zM930 324h4v1h-4zM934 323h3v1h-3zM937 322h3v1h-3zM940 321h2v1h-2zM942 320h3v1h-3zM945 319h5v1h-5zM950 318h6v1h-6zM956 317h5v1h-5zM961 316h4v1h-4zM965 315h4v1h-4zM969 314h3v1h-3zM972 313h4v1h-4zM976 312h4v1h-4zM980 311h5v1h-5zM985 310h6v1h-6zM991 309h4v1h-4zM995 308h4v1h-4zM999 307h4v1h-4zM1003 306h4v1h-4zM1007 305h4v1h-4zM1011 304h4v1h-4zM1015 303h5v1h-5zM1020 302h6v1h-6zM1026 301h5v1h-5zM1031 300h6v1h-6zM1037 299h2v1h-2z"/>
<path shape-rendering="crispEdges" fill="#c0c0c0" d="M4 364h18v1h-18zM22 363h47v1h-47zM69 362h35v1h-35zM104 361h46v1h-46zM150 360h93v1h-93zM243 359h58v1h-58zM301 358h82v1h-82zM383 357h58v1h-58zM441 356h70v1h-70zM511 355h46v1h-46zM557 354h58v1h-58zM615 353h59v1h-59zM674 352h35v1h-35zM709 351h46v1h-46zM755 350h82v1h-82zM837 349h11v1h-11zM848 348h9v1h-9zM857 347h6v1h-6zM863 346h5v1h-5zM868 345h6v1h-6zM874 344h6v1h-6zM880 343h6v1h-6zM886 342h6v1h-6zM892 341h6v1h-6zM898 340h5v1h-5zM903 339h6v1h-6zM909 338h6v1h-6zM915 337h6v1h-6zM921 336h9v1h-9zM930 335h8v1h-8zM938 334h6v1h-6zM944 333h9v1h-9zM953 332h9v1h-9zM962 331h6v1h-6zM968 330h8v1h-8zM976 329h9v1h-9zM985 328h6v1h-6zM991 327h5v1h-5zM996 326h6v1h-6zM1002 325h9v1h-9zM1011 324h9v1h-9zM1020 323h6v1h-6zM1026 322h8v1h-8zM1034 321h5v1h-5z"/>
<path shape-rendering="crispEdges" fill="#0000ff" d="M4 360h18v1h-18zM22 359h93v1h-93zM115 358h82v1h-82zM197 357h69v1h-69zM266 356h59v1h-59zM325 355h81v1h-81zM406 354h361v1h-361zM767 355h93v1h-93zM860 354h11v1h-11zM871 353h12v1h-12zM883 352h12v1h-12zM895 351h23v1h-23zM918 350h12v1h-12zM930 349h23v1h-23zM953 348h12v1h-12zM965 347h23v1h-23zM988 346h11v1h-11zM999 345h40v1h-40z"/>
<path shape-rendering="crispEdges" fill="#ffffff" d="M4 528h815v1h-815zM818 524h1v4h-1zM819 514h1v10h-1zM820 504h1v10h-1zM821 494h1v10h-1zM822 485h1v9h-1zM823 475h1v10h-1zM824 465h1v10h-1zM825 455h1v10h-1zM826 446h1v9h-1zM827 436h1v10h-1zM828 426h1v10h-1zM829 416h1v10h-1zM830 411h1v5h-1zM831 416h1v10h-1zM832 426h1v10h-1zM833 436h1v10h-1zM834 446h1v9h-1zM835 455h1v10h-1zM836 465h1v10h-1zM837 475h1v10h-1zM838 485h1v9h-1zM839 494h1v10h-1zM840 504h1v10h-1zM841 514h1v10h-1zM842 524h1v4h-1zM842 528h197v1h-197z"/>
<g stroke="#c8c8c8" stroke-width="1" fill="none" shape-rendering="crispEdges"><path d="M399.5 370.5H411M399.5 370.5l3.5 -2.5M399.5 370.5l3.5 3"/><path d="M911.5 25.5L923 28.5M911.5 25.5L915 23.2M911.5 25.5L913.5 28.5"/></g>
<text x="412.6" y="375" fill="#c8c8c8" textLength="23.2" lengthAdjust="spacingAndGlyphs">2.42</text>
<text x="926" y="35" fill="#c8c8c8" textLength="23" lengthAdjust="spacingAndGlyphs">5.70</text>
<path d="M1048.6 11.5L1054 6.1L1059.4 11.5L1054 16.9Z" fill="none" stroke="#6a6a6a" stroke-width="0.9"/>
<text x="2" y="15" style="font-size:11.5px" fill="#cfcfcf" textLength="47.5" lengthAdjust="spacingAndGlyphs">海王生物</text>
<text x="52.5" y="15" style="font-size:11.5px" fill="#cfcfcf" textLength="30.5" lengthAdjust="spacingAndGlyphs">(日线)</text>
<circle cx="96.0" cy="11.0" r="6.0" fill="#7d7d7d"/>
<path d="M93.0 10.0l3 3l3 -3" stroke="#111" stroke-width="1.3" fill="none"/>
<text x="106.8" y="15" fill="#ffffff" textLength="56.8" lengthAdjust="spacingAndGlyphs">MA5: 4.10</text>
<text x="170.0" y="15" fill="#ffff00" textLength="63.5" lengthAdjust="spacingAndGlyphs">MA10: 4.22</text>
<text x="240.0" y="15" fill="#ff00ff" textLength="64.0" lengthAdjust="spacingAndGlyphs">MA20: 4.19</text>
<text x="310.0" y="15" fill="#00ff00" textLength="64.0" lengthAdjust="spacingAndGlyphs">MA60: 3.10</text>
<text x="380.0" y="15" fill="#c0c0c0" textLength="71.0" lengthAdjust="spacingAndGlyphs">MA120: 2.89</text>
<text x="457.0" y="15" fill="#0000ff" textLength="71.0" lengthAdjust="spacingAndGlyphs">MA250: 2.66</text>
<circle cx="6.7" cy="398.2" r="5.7" fill="#7d7d7d"/>
<path d="M3.7 397.2l3 3l3 -3" stroke="#111" stroke-width="1.3" fill="none"/>
<text x="17" y="402" style="font-size:11.5px" fill="#a8a8a8" textLength="65.5" lengthAdjust="spacingAndGlyphs">机构潜伏点F</text>
<text x="88" y="402" style="font-size:11.5px" fill="#e6e6e6" textLength="78" lengthAdjust="spacingAndGlyphs">游资妖股: 0.00</text>
<path d="M590 375h11l2 2v11h-13z" fill="#0a3c7c"/>
<text class="ic" x="590.5" y="386">财</text>
<path d="M893 375h11l2 2v11h-13z" fill="#8c0000"/>
<text class="ic" x="893.5" y="386">涨</text>
<rect x="916" y="375" width="12" height="13" fill="#008200"/>
<text class="ic" x="916.0" y="386">跌</text>
<path d="M928 375h11l2 2v11h-13z" fill="#a0500a"/>
<text class="ic" x="928.5" y="386">榜</text>
</svg></body></html>
